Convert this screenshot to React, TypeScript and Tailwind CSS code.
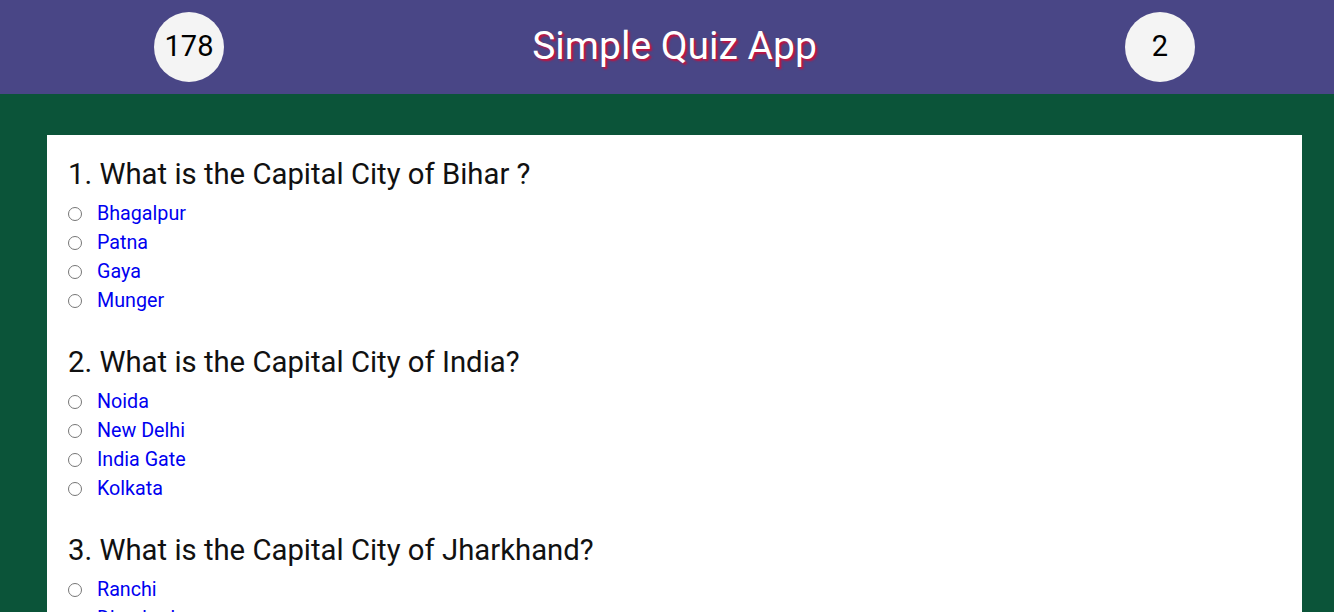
import React, { useState } from 'react';

const questions = [
  {
    q: 'What is the Capital City of Bihar ?',
    options: ['Bhagalpur', 'Patna', 'Gaya', 'Munger'],
  },
  {
    q: 'What is the Capital City of India?',
    options: ['Noida', 'New Delhi', 'India Gate', 'Kolkata'],
  },
  {
    q: 'What is the Capital City of Jharkhand?',
    options: ['Ranchi', 'Dhanbad', 'Jamshedpur', 'Bokaro'],
  },
];

const App: React.FC = () => {
  const [answers, setAnswers] = useState<Record<number, string>>({});

  return (
    <div className="min-h-screen bg-[#0b5439]" style={{ fontFamily: "Roboto, 'Liberation Sans', sans-serif" }}>
      {/* Header */}
      <header className="h-[94px] bg-[#494686] flex items-center pl-[154px] pr-[139px]">
        <div className="w-[70px] h-[70px] rounded-full bg-[#f4f4f4] flex items-center justify-center text-[29px] text-black">
          178
        </div>
        <h1 className="flex-1 text-center text-white text-[39px] [text-shadow:2px_2px_2px_#c8103c] -mt-[2px]">
          Simple Quiz App
        </h1>
        <div className="w-[70px] h-[70px] rounded-full bg-[#f4f4f4] flex items-center justify-center text-[29px] text-black">
          {Object.keys(answers).length + 2}
        </div>
      </header>

      {/* Quiz card */}
      <main className="pt-[41px] pl-[47px]">
        <div className="w-[1255px] bg-white pl-[21px] pt-[19px] pb-10">
          {questions.map((item, i) => (
            <div key={i} className="mb-[27px]">
              <h2 className="text-[29.3px] leading-[40px] text-[#111] mb-[5px]">
                {i + 1}. {item.q}
              </h2>
              <div className="flex flex-col">
                {item.options.map((opt) => (
                  <label key={opt} className="flex items-center h-[29px] text-[19.7px] text-[#0000f0] cursor-pointer">
                    <input
                      type="radio"
                      name={`q${i}`}
                      checked={answers[i] === opt}
                      onChange={() => setAnswers({ ...answers, [i]: opt })}
                      className="m-0 w-[14px] h-[14px] mr-[15px]"
                    />
                    {opt}
                  </label>
                ))}
              </div>
            </div>
          ))}
        </div>
      </main>
    </div>
  );
};

export default App;
